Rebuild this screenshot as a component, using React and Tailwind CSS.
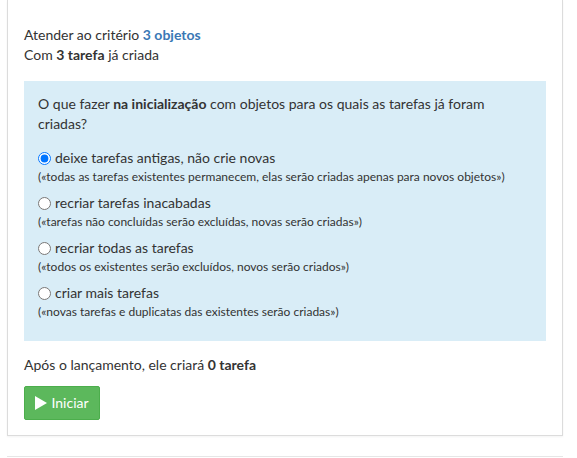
import React from 'react';

const options = [
  {
    label: 'deixe tarefas antigas, não crie novas',
    hint: '(«todas as tarefas existentes permanecem, elas serão criadas apenas para novos objetos»)',
  },
  {
    label: 'recriar tarefas inacabadas',
    hint: '(«tarefas não concluídas serão excluídas, novas serão criadas»)',
  },
  {
    label: 'recriar todas as tarefas',
    hint: '(«todos os existentes serão excluídos, novos serão criados»)',
  },
  {
    label: 'criar mais tarefas',
    hint: '(«novas tarefas e duplicatas das existentes serão criadas»)',
  },
];

const App = () => {
  return (
    <div className="min-h-[458px] bg-white font-['Lato','Open_Sans',sans-serif] text-[14px] leading-[20px] text-[#333]">
      <div className="mx-[7px] w-[556px] border-x border-b border-[#dcdcdc] bg-white px-[16px] pt-[25px] pb-[15px] shadow-[0_1px_2px_rgba(0,0,0,0.05)]">
        <p>
          Atender ao critério <b className="text-[#3a78b5]">3 objetos</b>
        </p>
        <p>
          Com <b>3 tarefa</b> já criada
        </p>

        <div className="mt-[16px] bg-[#d9edf7] px-[14px] py-[13px]">
          <p className="mb-[14px]">
            O que fazer <b>na inicialização</b> com objetos para os quais as tarefas já foram criadas?
          </p>
          {options.map((opt, i) => (
            <label key={i} className="mb-[7px] block cursor-pointer">
              <span className="flex h-[20px] items-center gap-[4px]">
                <input
                  type="radio"
                  name="mode"
                  defaultChecked={i === 0}
                  className="m-0 h-[13px] w-[13px]"
                />
                <span>{opt.label}</span>
              </span>
              <span className="block text-[12px] leading-[18px]">{opt.hint}</span>
            </label>
          ))}
        </div>

        <p className="mt-[14px]">
          Após o lançamento, ele criará <b>0 tarefa</b>
        </p>

        <button className="mt-[11px] flex h-[34px] w-[76px] items-center justify-center gap-[4px] rounded-[2px] border border-[#4cae4c] bg-[#5cb85c] text-white">
          <svg width="12" height="14" viewBox="0 0 12 14">
            <path d="M0 0 L12 7 L0 14 Z" fill="white" />
          </svg>
          <span>Iniciar</span>
        </button>
      </div>
      <div className="mx-[7px] mt-[20px] w-[556px] border-t border-[#e6e6e6]" />
    </div>
  );
};

export default App;
